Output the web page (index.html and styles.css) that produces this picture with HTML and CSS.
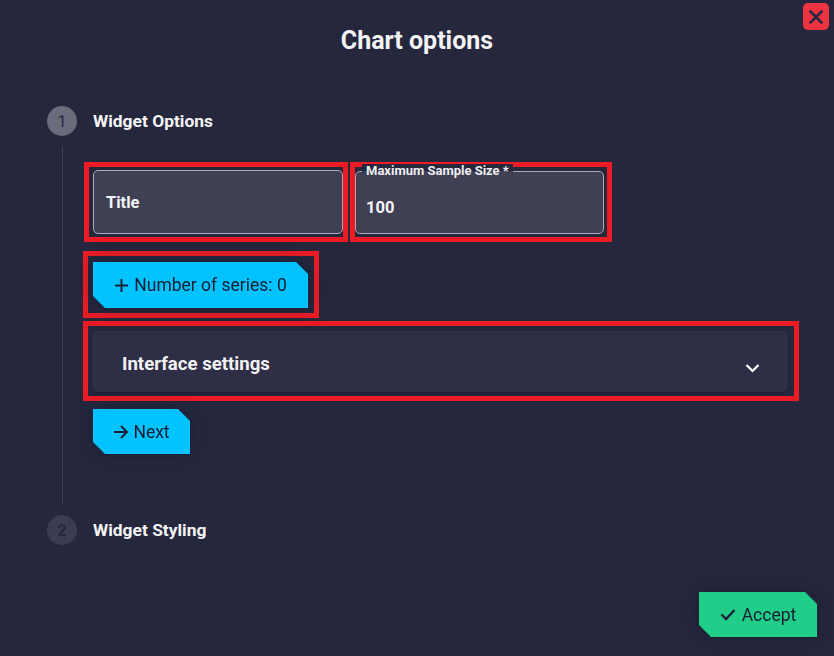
FILE: index.html
```html
<!DOCTYPE html>
<html>
<head>
<meta charset="utf-8">
<link rel="stylesheet" href="styles.css">
</head>
<body>
<div class="modal">
  <header class="modal-header">
    <h1 class="modal-title">Chart options</h1>
    <button class="close-btn" aria-label="Close">
      <svg width="16" height="16" viewBox="0 0 16 16"><path d="M2.5 2.5 L13.5 13.5 M13.5 2.5 L2.5 13.5" stroke="#25273d" stroke-width="2.6" stroke-linecap="square"/></svg>
    </button>
  </header>

  <section class="step">
    <div class="step-head">
      <span class="step-num active">1</span>
      <span class="step-label">Widget Options</span>
    </div>
    <div class="step-body">
      <div class="field-row">
        <div class="mark mark-title">
          <div class="field">
            <span class="field-placeholder">Title</span>
          </div>
        </div>
        <div class="mark mark-size">
          <div class="field">
            <span class="field-legend">Maximum Sample Size *</span>
            <span class="field-value">100</span>
          </div>
        </div>
      </div>

      <div class="mark mark-series">
        <div class="btn-wrap">
          <button class="cut-btn cyan series-btn">
            <svg width="15" height="15" viewBox="0 0 15 15"><path d="M7.5 1 V14 M1 7.5 H14" stroke="#1d2035" stroke-width="2"/></svg>
            <span>Number of series: 0</span>
          </button>
        </div>
      </div>

      <div class="mark mark-panel">
        <div class="panel">
          <span class="panel-title">Interface settings</span>
          <svg class="chevron" width="15" height="10" viewBox="0 0 15 10"><path d="M1.5 2 L7.5 8 L13.5 2" fill="none" stroke="#ffffff" stroke-width="2.2"/></svg>
        </div>
      </div>

      <div class="btn-wrap next-wrap">
        <button class="cut-btn cyan next-btn">
          <svg width="16" height="14" viewBox="0 0 16 14"><path d="M1 7 H14 M8 1 L14 7 L8 13" fill="none" stroke="#1d2035" stroke-width="2"/></svg>
          <span>Next</span>
        </button>
      </div>
    </div>
  </section>

  <section class="step">
    <div class="step-head step-two">
      <span class="step-num">2</span>
      <span class="step-label">Widget Styling</span>
    </div>
  </section>

  <footer class="modal-footer">
    <div class="btn-wrap">
      <button class="cut-btn green accept-btn">
        <svg width="16" height="13" viewBox="0 0 16 13"><path d="M1.5 6.5 L6 11 L14.5 2" fill="none" stroke="#1d2035" stroke-width="2.4"/></svg>
        <span>Accept</span>
      </button>
    </div>
  </footer>
</div>
</body>
</html>
```

FILE: styles.css
```css
* { box-sizing: border-box; }

html, body {
  margin: 0;
  padding: 0;
}

body {
  background: #25273d;
  font-family: Roboto, "Liberation Sans", Arial, sans-serif;
  color: #ffffff;
  width: 834px;
  height: 656px;
  overflow: hidden;
}

.modal {
  position: relative;
  width: 834px;
  height: 656px;
  display: flex;
  flex-direction: column;
}

.modal-header {
  height: 80px;
  display: flex;
  align-items: center;
  justify-content: center;
}

.modal-title {
  margin: 0;
  font-size: 25px;
  font-weight: 700;
  color: #f4f4f6;
}

.close-btn {
  position: absolute;
  top: 3px;
  right: 5px;
  width: 26px;
  height: 27px;
  border: 0;
  border-radius: 5px;
  background: #ef3340;
  padding: 0;
  display: flex;
  align-items: center;
  justify-content: center;
}

.step {
  padding-left: 47px;
}

.step-head {
  display: flex;
  align-items: center;
  gap: 16px;
  height: 30px;
  margin-top: 26px;
}

.step-num {
  width: 30px;
  height: 30px;
  border-radius: 50%;
  background: #3a3c51;
  color: #25273d;
  font-size: 16px;
  font-weight: 700;
  display: flex;
  align-items: center;
  justify-content: center;
}

.step-num.active {
  background: #6a6b7b;
  color: #2b2d42;
  font-weight: 400;
  font-size: 17px;
}

.step-label {
  font-size: 17.4px;
  font-weight: 700;
  color: #f5f5f7;
}

.step-body {
  margin-top: 10px;
  margin-left: 15px;
  border-left: 1px solid #3a3c51;
  padding-left: 20px;
  padding-top: 16px;
  padding-bottom: 51px;
}

.step-two {
  margin-top: 10px;
}

.mark {
  border: 5px solid #ed1c24;
}

.field-row {
  display: flex;
  gap: 2px;
}

.mark-title {
  width: 264px;
  margin-left: 1px;
  padding: 3px 0 3px 4px;
}

.mark-size {
  width: 262px;
  padding: 4px 3px 3px 0;
}

.field {
  position: relative;
  height: 64px;
  background: #3f4054;
  border: 1px solid #a9aab5;
  border-radius: 5px;
  display: flex;
  align-items: center;
}

.mark-size .field {
  height: 63px;
}

.field-placeholder {
  padding-left: 12px;
  font-size: 16.5px;
  font-weight: 700;
  color: #f4f4f6;
}

.field-legend {
  position: absolute;
  top: -8px;
  left: 6px;
  padding: 0 4px;
  font-size: 13px;
  font-weight: 700;
  line-height: 14px;
  color: #eeeef2;
  background: linear-gradient(to bottom, #25273d 0, #25273d 7px, #3f4054 7px);
}

.field-value {
  padding-left: 10px;
  padding-top: 10px;
  font-size: 16.5px;
  font-weight: 700;
  color: #f4f4f6;
}

.mark-series {
  width: 236px;
  margin-top: 9px;
  padding: 6px 6px 5px 5px;
}

.btn-wrap {
  display: inline-block;
  filter: drop-shadow(0 0 10px rgba(10, 12, 28, 0.35));
}

.cut-btn {
  border: 0;
  padding: 0 16px;
  height: 46px;
  display: flex;
  align-items: center;
  gap: 4px;
  font-family: Roboto, "Liberation Sans", Arial, sans-serif;
  font-size: 17.5px;
  font-weight: 400;
  color: #1a1d30;
  clip-path: polygon(0 0, calc(100% - 12px) 0, 100% 12px, 100% 100%, 12px 100%, 0 calc(100% - 12px));
}

.cyan { background: #00c3ff; }
.green { background: #20cd89; }

.series-btn {
  width: 215px;
  justify-content: center;
  gap: 5px;
}

.mark-panel {
  width: 716px;
  margin-top: 3px;
  padding: 5px 6px 4px 4px;
}

.panel {
  height: 61px;
  background: #2e2f46;
  border-radius: 5px;
  box-shadow: 0 1px 3px rgba(10, 12, 28, 0.35);
  display: flex;
  align-items: center;
  justify-content: space-between;
  padding: 0 28px 0 30px;
}

.panel-title {
  font-size: 18.6px;
  font-weight: 700;
  color: #f2f2f5;
  margin-top: 4px;
}

.chevron {
  margin-top: 13px;
}

.next-wrap {
  margin-top: 8px;
  margin-left: 10px;
}

.next-btn {
  width: 97px;
  height: 45px;
  justify-content: center;
}

.modal-footer {
  margin-top: auto;
  display: flex;
  justify-content: flex-end;
  padding: 0 17px 19px 0;
}

.accept-btn {
  width: 118px;
  height: 45px;
  justify-content: center;
  gap: 6px;
}
```
